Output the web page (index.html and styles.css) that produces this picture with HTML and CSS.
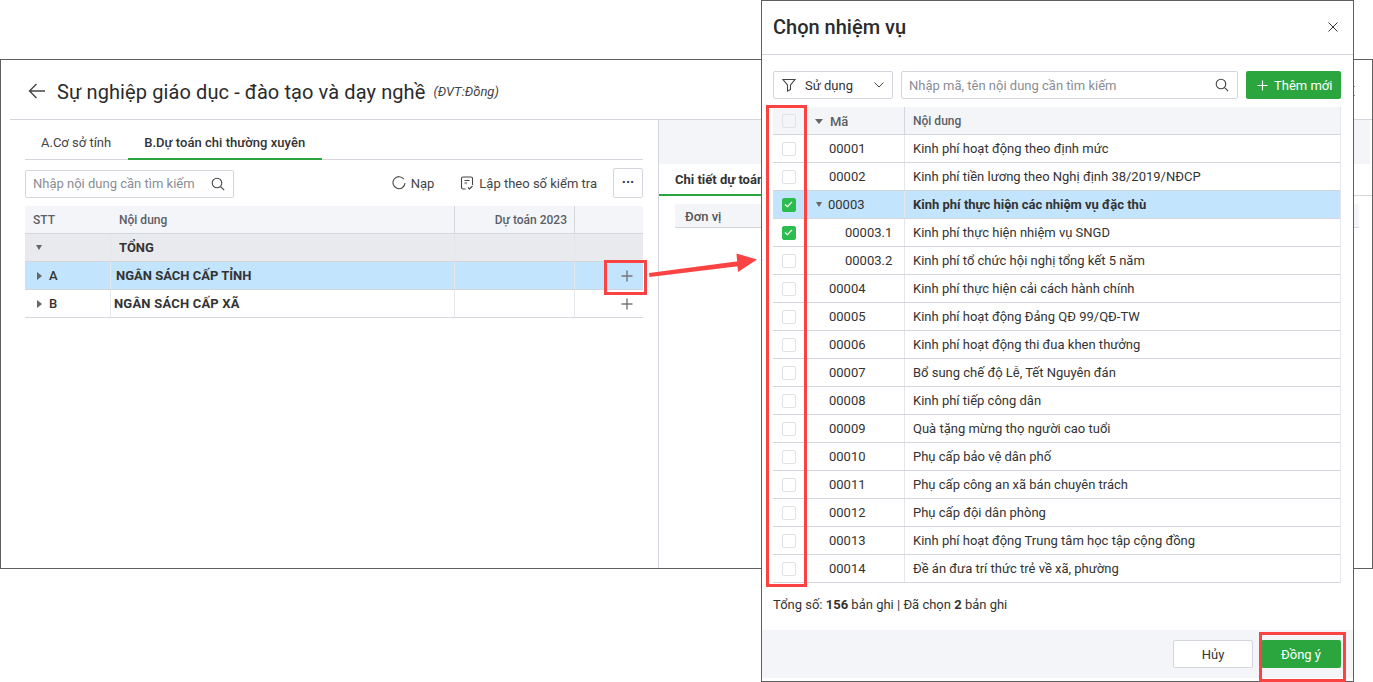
FILE: index.html
```html
<!DOCTYPE html>
<html lang="vi">
<head>
<meta charset="utf-8">
<title>Chọn nhiệm vụ</title>
<link rel="stylesheet" href="styles.css">
</head>
<body>
<section class="panel">
  <header class="panel-head">
    <svg class="ico-back" viewBox="0 0 18 16"><path d="M17 8H1.5M8.5 1 1.5 8l7 7"/></svg>
    <h1 class="panel-title">Sự nghiệp giáo dục - đào tạo và dạy nghề</h1>
    <span class="unit">(ĐVT:Đồng)</span>
    <svg class="ico-x ico-x-panel" viewBox="0 0 10 10"><path d="m.5.500 9 9M9.500.500l-9 9"/></svg>
  </header>
  <div class="panel-body">
    <div class="left">
      <div class="tabs">
        <span class="tab tab-a">A.Cơ sở tính</span>
        <span class="tab tab-on">B.Dự toán chi thường xuyên</span>
      </div>
      <div class="tools">
        <div class="search search-l">
          <span class="ph">Nhập nội dung cần tìm kiếm</span>
          <svg class="ico" viewBox="0 0 14 14"><circle cx="6" cy="6" r="4.8"/><path d="m9.6 9.6 3.6 3.6"/></svg>
        </div>
        <span class="spacer"></span>
        <span class="tool">
          <svg class="ico" viewBox="0 0 14 14"><path d="M11.9 3.2A6 6 0 1 0 13 7"/></svg>Nạp</span>
        <span class="tool tool-b">
          <svg class="ico" viewBox="0 0 14 14"><path d="M5.5 13H3a1.5 1.5 0 0 1-1.500-1.500V2.500A1.500 1.500 0 0 1 3 1h8a1.500 1.500 0 0 1 1.500 1.500V9M4.500 4.500h5M4.500 7h2.500M8 11.500l1.500 1.500 3-3"/></svg>Lập theo số kiểm tra</span>
        <span class="more">···</span>
      </div>
      <div class="grid">
        <div class="g-row g-head">
          <span class="c c1">STT</span><span class="c c2">Nội dung</span><span class="c c3 line">Dự toán 2023</span><span class="c c4 line"></span>
        </div>
        <div class="g-row g-total">
          <span class="c c1"><i class="car-d"></i></span><span class="c c2 line strong">TỔNG</span><span class="c c3 line"></span><span class="c c4 line"></span>
        </div>
        <div class="g-row g-sel">
          <span class="c c1"><i class="car-r"></i><b class="letter">A</b></span><span class="c c2 line strong shift-a">NGÂN SÁCH CẤP TỈNH</span><span class="c c3 line"></span><span class="c c4 line"><svg class="plus" viewBox="0 0 12 12"><path d="M6 .5v11M.5 6h11"/></svg></span>
        </div>
        <div class="g-row">
          <span class="c c1"><i class="car-r"></i><b class="letter">B</b></span><span class="c c2 line strong shift-b">NGÂN SÁCH CẤP XÃ</span><span class="c c3 line"></span><span class="c c4 line"><svg class="plus" viewBox="0 0 12 12"><path d="M6 .5v11M.5 6h11"/></svg></span>
        </div>
      </div>
    </div>
    <div class="right">
      <div class="right-top"></div>
      <div class="right-tab"><span class="right-tab-on">Chi tiết dự toán</span></div>
      <div class="right-head"><span>Đơn vị</span></div>
    </div>
  </div>
</section>

<section class="dialog">
  <header class="d-head">
    <h2 class="d-title">Chọn nhiệm vụ</h2>
    <svg class="ico-x" viewBox="0 0 10 10"><path d="m.5.500 9 9M9.500.500l-9 9"/></svg>
  </header>
  <div class="d-tools">
    <div class="select">
      <svg class="ico ico-f" viewBox="0 0 14 14"><path d="M1 1.500h12L8.500 7v4.500l-3 1.500V7z"/></svg>
      <span class="sel-text">Sử dụng</span>
      <svg class="chev" viewBox="0 0 10 6"><path d="m.5.500 4.500 4.500L9.500.500"/></svg>
    </div>
    <div class="search search-d">
      <span class="ph">Nhập mã, tên nội dung cần tìm kiếm</span>
      <svg class="ico" viewBox="0 0 14 14"><circle cx="6" cy="6" r="4.8"/><path d="m9.6 9.6 3.6 3.6"/></svg>
    </div>
    <button class="btn-add"><svg class="plus-w" viewBox="0 0 12 12"><path d="M6 .5v11M.5 6h11"/></svg>Thêm mới</button>
  </div>
  <div class="table">
    <div class="t-row t-head"><span class="t-chk"><i class="box"></i></span><span class="t-code"><i class="car-d car-code"></i>Mã</span><span class="t-name">Nội dung</span></div>
    <div class="t-row"><span class="t-chk"><i class="box"></i></span><span class="t-code lv1">00001</span><span class="t-name">Kinh phí hoạt động theo định mức</span></div>
    <div class="t-row"><span class="t-chk"><i class="box"></i></span><span class="t-code lv1">00002</span><span class="t-name">Kinh phí tiền lương theo Nghị định 38/2019/NĐCP</span></div>
    <div class="t-row t-sel"><span class="t-chk"><i class="box on"><svg viewBox="0 0 10 8"><path d="m1 4 2.800 2.500L9 1"/></svg></i></span><span class="t-code"><i class="car-d car-code2"></i>00003</span><span class="t-name strong">Kinh phí thực hiện các nhiệm vụ đặc thù</span></div>
    <div class="t-row"><span class="t-chk"><i class="box on"><svg viewBox="0 0 10 8"><path d="m1 4 2.800 2.500L9 1"/></svg></i></span><span class="t-code lv2">00003.1</span><span class="t-name">Kinh phí thực hiện nhiệm vụ SNGD</span></div>
    <div class="t-row"><span class="t-chk"><i class="box"></i></span><span class="t-code lv2">00003.2</span><span class="t-name">Kinh phí tổ chức hội nghị tổng kết 5 năm</span></div>
    <div class="t-row"><span class="t-chk"><i class="box"></i></span><span class="t-code lv1">00004</span><span class="t-name">Kinh phí thực hiện cải cách hành chính</span></div>
    <div class="t-row"><span class="t-chk"><i class="box"></i></span><span class="t-code lv1">00005</span><span class="t-name">Kinh phí hoạt động Đảng QĐ 99/QĐ-TW</span></div>
    <div class="t-row"><span class="t-chk"><i class="box"></i></span><span class="t-code lv1">00006</span><span class="t-name">Kinh phí hoạt động thi đua khen thưởng</span></div>
    <div class="t-row"><span class="t-chk"><i class="box"></i></span><span class="t-code lv1">00007</span><span class="t-name">Bổ sung chế độ Lễ, Tết Nguyên đán</span></div>
    <div class="t-row"><span class="t-chk"><i class="box"></i></span><span class="t-code lv1">00008</span><span class="t-name">Kinh phí tiếp công dân</span></div>
    <div class="t-row"><span class="t-chk"><i class="box"></i></span><span class="t-code lv1">00009</span><span class="t-name">Quà tặng mừng thọ người cao tuổi</span></div>
    <div class="t-row"><span class="t-chk"><i class="box"></i></span><span class="t-code lv1">00010</span><span class="t-name">Phụ cấp bảo vệ dân phố</span></div>
    <div class="t-row"><span class="t-chk"><i class="box"></i></span><span class="t-code lv1">00011</span><span class="t-name">Phụ cấp công an xã bán chuyên trách</span></div>
    <div class="t-row"><span class="t-chk"><i class="box"></i></span><span class="t-code lv1">00012</span><span class="t-name">Phụ cấp đội dân phòng</span></div>
    <div class="t-row"><span class="t-chk"><i class="box"></i></span><span class="t-code lv1">00013</span><span class="t-name">Kinh phí hoạt động Trung tâm học tập cộng đồng</span></div>
    <div class="t-row"><span class="t-chk"><i class="box"></i></span><span class="t-code lv1">00014</span><span class="t-name">Đề án đưa trí thức trẻ về xã, phường</span></div>
  </div>
  <p class="summary">Tổng số: <b>156</b> bản ghi | Đã chọn <b>2</b> bản ghi</p>
  <footer class="d-foot">
    <button class="btn-cancel">Hủy</button>
    <button class="btn-ok">Đồng ý</button>
  </footer>
</section>

<i class="mark mark-plus"></i>
<i class="mark mark-col"></i>
<i class="mark mark-ok"></i>
<svg class="arrow" viewBox="0 0 110 30"><path class="arrow-tip" d="M1 23 92 11v5L1.500 27zM88.500 3.500 109 9.500 90 22z"/></svg>
</body>
</html>
```

FILE: styles.css
```css
* { box-sizing: border-box; }
html, body { margin: 0; height: 100%; }
body {
  position: relative;
  width: 1373px;
  height: 682px;
  overflow: hidden;
  background: #fff;
  font-family: Roboto, "Noto Sans", sans-serif;
  font-size: 13px;
  color: #212121;
}
h1, h2, p { margin: 0; font-weight: 400; }
svg { display: block; fill: none; stroke: currentColor; }

/* background window */
.panel {
  position: absolute;
  left: 0;
  top: 59px;
  width: 1373px;
  height: 510px;
  border: 1px solid #5f5f5f;
  background: #fff;
  display: flex;
  flex-direction: column;
}
.panel-head {
  height: 60px;
  margin-left: 9px;
  border-bottom: 1px solid #d4d6dd;
  display: flex;
  align-items: center;
  padding: 3px 17px 0 18px;
  flex: none;
}
.ico-back { width: 18px; height: 16px; color: #444; stroke-width: 1.4; margin-right: 11px; }
.panel-title { font-size: 20px; color: #2b2b2b; letter-spacing: .1px; padding-top: 1px; }
.unit { font-size: 13px; font-style: italic; color: #444; margin-left: 8px; }
.ico-x-panel { margin-left: auto; }
.panel-body { flex: 1; display: flex; min-height: 0; }
.left { width: 649px; margin-left: 9px; padding: 0 15px; border-right: 1px solid #d4d6dd; flex: none; }
.tabs { height: 40px; display: flex; border-bottom: 1px solid #d4d6dd; }
.tab { height: 40px; line-height: 46px; padding: 0 16px; color: #444; }
.tab-a { padding-right: 17px; }
.tab-on { font-weight: 500; color: #333; border-bottom: 2px solid #2ba63e; letter-spacing: .03px; padding-right: 17px; }
.tools { height: 46px; display: flex; align-items: center; }
.search {
  height: 28px;
  border: 1px solid #d4d6dd;
  border-radius: 2px;
  display: flex;
  align-items: center;
  justify-content: space-between;
  padding: 0 8px 0 7px;
  background: #fff;
}
.search-l { width: 209px; margin-top: 1px; }
.ph { color: #8a8d94; }
.ico { width: 14px; height: 14px; color: #444; stroke-width: 1.1; flex: none; }
.spacer { flex: 1; }
.tool { display: flex; align-items: center; gap: 5px; color: #444; margin-right: 26px; }
.tool-b { margin-right: 16px; }
.more {
  width: 30px;
  height: 30px;
  border: 1px solid #d4d6dd;
  border-radius: 2px;
  text-align: center;
  line-height: 26px;
  font-weight: 700;
  color: #333;
  font-size: 14px;
}
.g-row { display: flex; height: 28px; border-bottom: 1px solid #d4d6dd; }
.c { display: flex; align-items: center; height: 100%; font-size: 13px; color: #333; flex: none; }
.c1 { width: 85px; padding-left: 8px; }
.c2 { width: 344px; padding-left: 8px; }
.c3 { width: 120px; justify-content: flex-end; padding-right: 7px; }
.c4 { width: 69px; justify-content: flex-end; padding-right: 10px; }
.line { border-left: 1px solid #e4e6eb; }
.g-head { background: #f4f5f8; }
.g-head .c { font-weight: 500; font-size: 12px; color: #5b5f66; padding-top: 1px; }
.g-head .c2 { padding-left: 9px; }
.g-head .line { border-left-color: #d4d6dd; }
.g-total { background: #e9eaed; }
.g-sel { background: #c2e4fd; }
.strong { font-weight: 700; }
.shift-a { padding-left: 5px; }
.shift-b { padding-left: 3px; letter-spacing: .2px; }
.letter { font-weight: 500; margin-left: 7px; color: #333; }
.car-d { display: block; width: 0; height: 0; border: 3.5px solid transparent; border-top: 5px solid #666; border-bottom: 0; margin-left: 3px; }
.car-r { display: block; width: 0; height: 0; border: 4px solid transparent; border-left: 5px solid #666; border-right: 0; margin-left: 4px; }
.plus { width: 12px; height: 12px; color: #777; stroke-width: 1.4; }
.right { flex: 1; min-width: 0; }
.right-top { height: 44px; margin-right: 2px; background: #f4f5f8; }
.right-tab { height: 32px; border-bottom: 1px solid #d4d6dd; font-weight: 700; color: #333; }
.right-tab-on { display: block; width: 140px; height: 32px; line-height: 32px; padding-left: 16px; border-bottom: 2px solid #2ba63e; }
.right-head { margin: 8px 13px 0 16px; height: 24px; background: #f4f5f8; border-bottom: 1px solid #d4d6dd; padding-left: 10px; line-height: 25px; font-size: 13px; font-weight: 500; color: #555; }

/* dialog */
.dialog {
  position: absolute;
  left: 761px;
  top: 0;
  width: 593px;
  height: 682px;
  border: 1px solid #5f5f5f;
  background: #fff;
  display: flex;
  flex-direction: column;
}
.d-head {
  height: 54px;
  flex: none;
  border-bottom: 1px solid #d4d6dd;
  display: flex;
  align-items: center;
  justify-content: space-between;
  padding: 0 15px 2px 11px;
}
.d-title { font-size: 20px; font-weight: 500; color: #2b2b2b; }
.ico-x { width: 10px; height: 10px; color: #333; stroke-width: 1; flex: none; }
.d-tools { height: 52px; flex: none; display: flex; align-items: flex-start; padding: 16px 12px 0 11px; }
.select {
  width: 120px;
  height: 28px;
  border: 1px solid #d4d6dd;
  border-radius: 2px;
  display: flex;
  align-items: center;
  padding: 0 8px;
}
.ico-f { margin-right: 9px; }
.sel-text { flex: 1; color: #333; }
.chev { width: 10px; height: 6px; color: #444; stroke-width: 1; }
.search-d { width: 337px; margin-left: 8px; }
.btn-add {
  margin-left: 8px;
  width: 95px;
  height: 28px;
  border: 0;
  border-radius: 2px;
  background: #2ba63e;
  color: #fff;
  font: inherit;
  display: flex;
  align-items: center;
  gap: 6px;
  padding: 0 0 0 11px;
}
.plus-w { width: 11px; height: 11px; stroke-width: 1.2; color: #fff; }
.table { margin: 0 12px 0 11px; border-right: 1px solid #e4e6eb; flex: none; }
.t-row { height: 28px; display: flex; border-bottom: 1px solid #d4d6dd; align-items: center; }
.t-chk { width: 32px; display: flex; justify-content: center; flex: none; }
.box { display: block; width: 14px; height: 14px; border: 1.500px solid #e0e2e7; border-radius: 2px; background: #fff; }
.t-head .box { background: #f4f5f8; }
.box.on { background: #2dbd4e; border-color: #2dbd4e; }
.box svg { width: 9px; height: 7px; margin: 2px 1px; color: #fff; stroke-width: 1.5; }
.t-code { width: 99px; height: 100%; display: flex; align-items: center; flex: none; color: #333; }
.lv1 { padding-left: 24px; }
.lv2 { padding-left: 40px; }
.t-name { flex: 1; height: 100%; display: flex; align-items: center; padding-left: 8px; border-left: 1px solid #e4e6eb; color: #333; }
.t-head { background: #f4f5f8; }
.t-head .t-code, .t-head .t-name { font-weight: 500; font-size: 12px; color: #5b5f66; padding-top: 1px; }
.t-head .t-name { border-left-color: #d4d6dd; }
.t-head .t-code { font-size: 13px; padding-left: 10px; }
.car-code { margin: 0 7px 0 0; border-width: 5px 4px 0; }
.car-code2 { margin: 0 6px 0 11px; }
.t-sel { background: #c2e4fd; }
.summary { height: 47px; flex: none; line-height: 44px; padding-left: 11px; color: #333; }
.d-foot {
  height: 48px;
  flex: none;
  background: #f4f5f8;
  display: flex;
  align-items: center;
  justify-content: flex-end;
  gap: 8px;
  padding: 0 12px 0 0;
}
.btn-cancel, .btn-ok { width: 80px; height: 28px; border-radius: 2px; font: inherit; padding: 0; }
.btn-cancel { background: #fff; border: 1px solid #d4d6dd; color: #333; }
.btn-ok { background: #2ba63e; border: 0; color: #fff; }

/* annotations */
.mark { position: absolute; display: block; border: 3px solid #fc4343; }
.mark-plus { left: 604px; top: 260px; width: 43px; height: 35px; }
.mark-col { left: 766px; top: 105px; width: 41px; height: 482px; }
.mark-ok { left: 1259px; top: 632px; width: 87px; height: 50px; }
.arrow { position: absolute; left: 648px; top: 250px; width: 110px; height: 30px; }
.arrow-tip { fill: #fc4343; stroke: none; }
```
